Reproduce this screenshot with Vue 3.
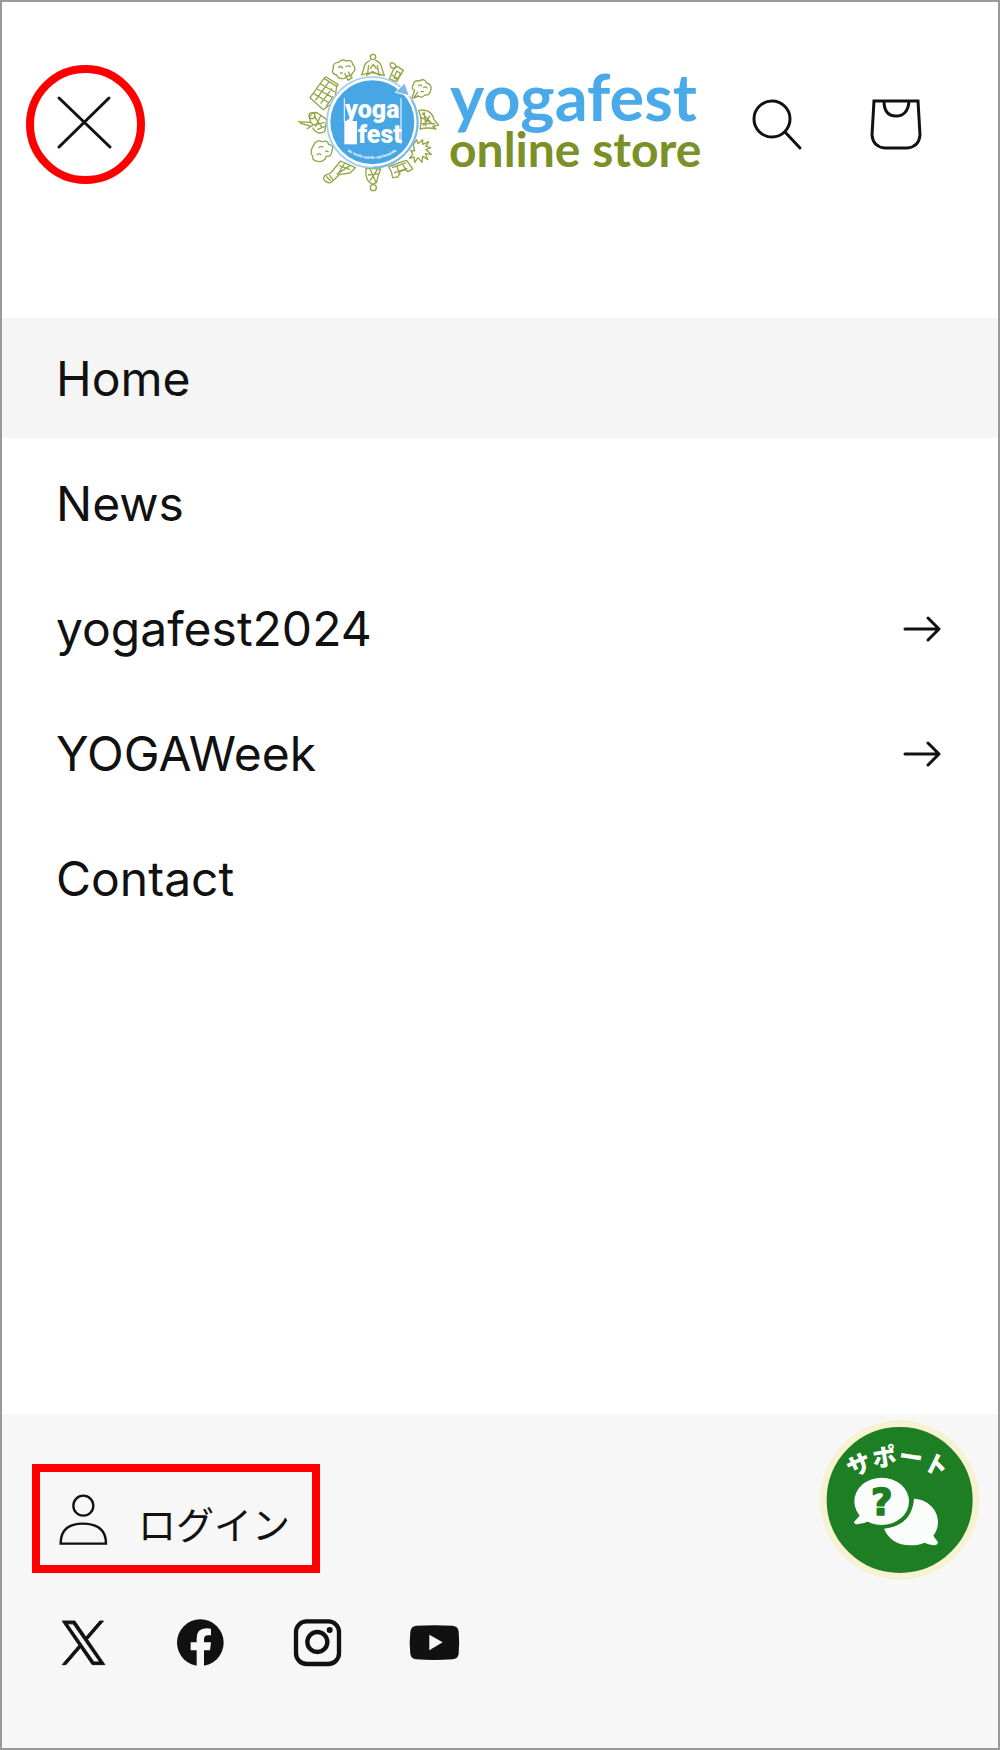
<script setup>
const menu = [
  { label: 'Home', current: true },
  { label: 'News' },
  { label: 'yogafest2024', nested: true },
  { label: 'YOGAWeek', nested: true },
  { label: 'Contact' },
]
</script>

<template>
  <div class="page">
    <header class="header">
      <button class="close" type="button" aria-label="Close menu">
        <svg width="56" height="56" viewBox="0 0 56 56" aria-hidden="true">
          <path d="M1 2l51 49M51 2L1 51" fill="none" stroke="#111" stroke-width="3" stroke-linecap="round" />
        </svg>
      </button>

      <a class="logo" href="#" aria-label="yogafest online store">
        <svg width="404" height="140" viewBox="0 0 404 140">
          <g transform="translate(-8 -9) scale(.3333)">
            <g class="doodle">
              <!-- seated figure, top -->
              <circle cx="249" cy="36" r="8" />
              <path d="M241 46q-18 6-20 26l-6 18q32-14 68 2l-7-22q-4-20-20-24M236 60l-3 24M262 60l4 24M240 72l10-14 10 14M228 92l20-12 24 12" />
              <!-- bean and camera -->
              <path d="M304 68q-8-14 2-15 8 2 12 10-4 10-14 5zM322 64l18 12-20 34-22-8 12-28zM320 78l12 8-10 18-10-6zM306 90l16 10" />
              <!-- tree, upper left -->
              <path d="M164 100q-20 4-24-10-18-4-10-20-2-18 16-18 10-12 22-4 18-6 20 10 14 14 0 26-6 12-16 8zM164 84l10 22 12-8-12-18M145 68q8-8 14 2M168 66q8-8 14 0M150 84h8" />
              <!-- building -->
              <path d="M60 158l42-58 38 24-6 44-34 26zM72 146l46 28M82 132l46 26M92 117l42 24M76 166l40-54M92 176l34-46M108 184l22-30M102 100l6-4 36 22-4 8" />
              <!-- tree, right -->
              <path d="M366 160l8-24q-12-4-4-18 4-14 18-10 16-10 22 6 18 6 12 22-2 16-18 14-8 12-20 2-8 8-18 8zM372 158l12-18M384 122q8-6 12 2M400 128q6-6 12 2M392 140h10" />
              <!-- standing pose, left -->
              <path d="M24 230l38 2 8 8-20 12M62 232l-4-16q14-22 30-8l22 16-6 36q-24 12-36-12M30 234l34 10M72 212l24 36M92 212l-16 34M72 240l32-8M82 254l22-10" />
              <circle cx="66" cy="212" r="9" />
              <!-- shell, right -->
              <path d="M386 196q38-6 46 28l14 16-18 4 10 8q-26-6-48 0 8-28-4-56zM396 204l30 32M392 216l40 22M402 200l6 44M420 212l-20 30M392 236h44" />
              <!-- bush, lower left -->
              <path d="M70 302q8-20 26-12 18-6 20 8 18 4 10 18 0 20-18 18l-2 8q-14 12-26 6-14-2-12-14-10-12 2-32zM86 308q8-8 14 0M80 330q8-8 14 0M106 318l10 2" />
              <!-- spiky bush, lower right -->
              <path d="M370 300l10-16 4 12 14-12v14l18-8-8 14 14 4-14 6 16 14-18-2 8 18-16-10-2 18-12-14-10 14-2-16-14 4 10-12-6-12 12 2-4-18z" />
              <!-- guitar -->
              <path d="M152 348l44 20-16 16-30 4-22 20q-8 10-20 2-12-8-4-18 10-4 18-8zM164 354l-22 36M180 362l-40 26M108 394l14 14M118 390l10 14M148 362l32 12" />
              <!-- figure, bottom -->
              <path d="M228 370l44 2-8 22-4 18-14 6q-22-12-18-48zM240 372l18 40M262 374l-22 34M234 390l34-4" />
              <circle cx="250" cy="428" r="9" />
              <!-- bridge and cart -->
              <path d="M296 366l40-16 14-4 18 26-14 8-8-6-16 6-6 16-16 2-4-18zM306 368l42-14M312 384l40-14M320 362l10 28M336 354l12 22" />
            </g>
            <circle cx="247" cy="232" r="136" fill="#fff" stroke="#9fcdf0" stroke-width="5" />
            <circle cx="247" cy="232" r="126" fill="#48a6e5" />
            <path d="M366 166a136 136 0 0 1-119 202" fill="none" stroke="#7db9e8" stroke-width="6" />
            <path d="M316 142l28-28 14 38z" fill="#7db9e8" stroke="#fff" stroke-width="3" />
            <path d="M163 228h38v70h-38z" fill="#fff" />
            <path d="M163 160v70M333 160v136" stroke="#fff" stroke-width="3" />
          </g>
          <g class="badge-text">
            <text x="47" y="64">yoga</text>
            <text x="60" y="89">fest</text>
          </g>
          <path id="motto" d="M46 95q28 20 56 0" fill="none" />
          <text class="motto"><textPath href="#motto" startOffset="50%">be smile-earth-nationwide</textPath></text>
          <text class="word blue" x="152" y="67">yogafest</text>
          <text class="word olive" x="151" y="113">online store</text>
        </svg>
      </a>

      <div class="tools">
        <button type="button" aria-label="Search">
          <svg width="60" height="60" viewBox="0 0 60 60" fill="none" stroke="#111" stroke-width="3" aria-hidden="true">
            <circle cx="24" cy="25" r="18" />
            <path d="M37 38l15 16" stroke-linecap="round" />
          </svg>
        </button>
        <button type="button" aria-label="Cart">
          <svg width="60" height="60" viewBox="0 0 60 60" fill="none" stroke="#111" stroke-width="3" aria-hidden="true">
            <path d="M8 7h44l2 34q-1 12-13 13H19Q7 53 6 41zM18 7q0 15 12 15T43 7" />
          </svg>
        </button>
      </div>
    </header>

    <nav class="menu">
      <ul>
        <li v-for="item in menu" :key="item.label">
          <a href="#" :class="{ current: item.current }" :aria-current="item.current ? 'page' : null">
            <span>{{ item.label }}</span>
            <svg v-if="item.nested" width="38" height="28" viewBox="0 0 38 28" aria-hidden="true">
              <path d="M2 15h34M25 4l11 11-11 11" fill="none" stroke="#111" stroke-width="3" stroke-linecap="round" stroke-linejoin="round" />
            </svg>
          </a>
        </li>
      </ul>
    </nav>

    <footer class="footer">
      <a class="login" href="#">
        <svg width="48" height="52" viewBox="180 278 144 156" fill="none" stroke="#111" stroke-width="7" aria-hidden="true">
          <circle cx="250" cy="319" r="30" />
          <path d="M182 433q0-60 66-60 70 0 70 60z" />
        </svg>
        <span>ログイン</span>
      </a>

      <div class="social">
        <a href="#" aria-label="X">
          <svg width="48" height="48" viewBox="-90 -85 1350 1350" fill="#111" stroke="#111" stroke-width="26">
            <path d="M714.163 519.284L1160.89 0H1055.03L667.137 450.887L357.328 0H0L468.492 681.821L0 1226.37H105.866L515.491 750.218L842.672 1226.37H1200L714.137 519.284ZM569.165 687.828L521.697 619.934L144.011 79.694H306.615L611.412 515.685L658.88 583.579L1055.08 1150.3H892.476Z" />
          </svg>
        </a>
        <a href="#" aria-label="Facebook">
          <svg width="48" height="48" viewBox="438 84 144 144">
            <circle cx="511" cy="158" r="70" fill="#111" />
            <path d="M500 230V181H482V157H500V145Q500 115 530 115Q538 115 543 116V136H534Q522 136 522 148V157H543L540 181H522V230Z" fill="#f7f7f7" />
          </svg>
        </a>
        <a href="#" aria-label="Instagram">
          <svg width="48" height="48" viewBox="789 84 144 144" fill="none" stroke="#111">
            <rect x="798" y="94" width="129" height="128" rx="32" stroke-width="13" />
            <circle cx="862" cy="156" r="30" stroke-width="13" />
            <circle cx="899" cy="120" r="9" fill="#111" stroke="none" />
          </svg>
        </a>
        <a href="#" aria-label="YouTube">
          <svg width="48" height="48" viewBox="1140 84 144 144">
            <path d="M1158 107q55-3 110 0 17 2 18 18 3 33 0 66-2 15-18 17-55 4-110 0-15-2-17-17-4-33 0-66 2-16 17-18z" fill="#111" />
            <path d="M1198 134l40 23-40 24z" fill="#f7f7f7" />
          </svg>
        </a>
      </div>

      <button class="support" type="button" aria-label="サポート">
        <svg width="160" height="160" viewBox="60 60 480 480">
          <circle cx="299" cy="300" r="229" fill="#1e7e24" stroke="#f7f3d2" stroke-width="20" />
          <path id="support-arc" d="M93 302A240 240 0 0 1 493 302" fill="none" />
          <text class="support-text"><textPath href="#support-arc" startOffset="50%">サポート</textPath></text>
          <path d="M342 296c42 2 72 34 72 70 0 16-5 29-14 41l14 20q-2 9-11 9-16-1-30-8-16 8-42 8-58-1-79-50 84-10 90-90z" fill="#fbfdfb" />
          <ellipse cx="245" cy="304" rx="82" ry="71" fill="#fbfdfb" />
          <path d="M172 330l8 16-18 20q1 7 10 7 18-1 34-9z" fill="#fbfdfb" />
          <text class="question" x="245" y="346">?</text>
        </svg>
      </button>
    </footer>
  </div>
</template>

<style>
body {
  margin: 0;
}
</style>

<style scoped>
.page {
  box-sizing: border-box;
  display: flex;
  flex-direction: column;
  min-height: 100vh;
  border: 2px solid #999;
  background: #fff;
  color: #111;
  font-family: Inter, "Noto Sans CJK JP", sans-serif;
}

button {
  padding: 0;
  border: 0;
  background: none;
  color: inherit;
  cursor: pointer;
}

a {
  color: inherit;
  text-decoration: none;
}

svg {
  display: block;
  overflow: visible;
}

.header {
  display: grid;
  grid-template-columns: 1fr auto 1fr;
  align-items: center;
  padding-top: 52px;
}

.close {
  box-sizing: border-box;
  display: flex;
  align-items: center;
  justify-content: center;
  width: 119px;
  height: 119px;
  margin-left: 24px;
  border: 8px solid #f00;
  border-radius: 50%;
}

.tools {
  display: flex;
  justify-content: flex-end;
  gap: 58px;
  margin-right: 72px;
}

.doodle {
  fill: none;
  stroke: #93a545;
  stroke-width: 4;
  stroke-linejoin: round;
}

.word {
  font-family: Lato, sans-serif;
  font-weight: 700;
}

.blue {
  fill: #4aa9e9;
  font-size: 65px;
}

.olive {
  fill: #7b9027;
  font-size: 48px;
}

.badge-text {
  fill: #fff;
  font-family: Roboto, sans-serif;
  font-size: 25px;
  font-weight: 900;
}

.motto {
  fill: #fff;
  font-size: 4px;
  font-weight: 700;
  text-anchor: middle;
}

.menu {
  flex: 1;
  padding-top: 124px;
}

.menu ul {
  display: flex;
  flex-direction: column;
  gap: 5px;
  margin: 0;
  padding: 0;
  list-style: none;
}

.menu a {
  display: flex;
  align-items: center;
  justify-content: space-between;
  height: 120px;
  padding: 0 57px 0 54px;
  font-size: 48px;
}

.menu .current {
  background: #f5f5f5;
}

.footer {
  position: relative;
  padding: 50px 30px 82px;
  background: #f7f7f7;
}

.login {
  display: inline-flex;
  align-items: flex-end;
  gap: 30px;
  padding: 20px 22px 21px 20px;
  border: 8px solid #f00;
  font-family: "Noto Sans CJK JP", sans-serif;
  font-size: 38px;
  font-weight: 400;
  line-height: 42px;
  vertical-align: top;
}

.social {
  display: flex;
  gap: 69px;
  margin-top: 45px;
  padding-left: 27px;
}

.support {
  position: absolute;
  top: 6px;
  right: 18px;
}

.support-text {
  fill: #fff;
  font-family: "Noto Sans CJK JP", sans-serif;
  font-size: 72px;
  font-weight: 900;
  text-anchor: middle;
}

.question {
  fill: #1e7e24;
  stroke: #1e7e24;
  stroke-width: 4;
  stroke-linejoin: round;
  font-family: "DejaVu Sans", sans-serif;
  font-size: 114px;
  font-weight: 700;
  text-anchor: middle;
}
</style>
